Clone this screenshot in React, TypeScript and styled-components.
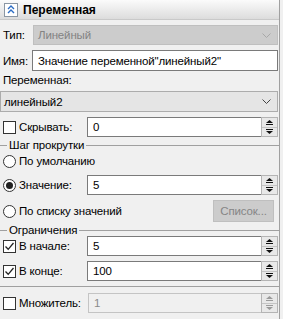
import React from 'react';
import styled, { createGlobalStyle } from 'styled-components';

const GlobalStyle = createGlobalStyle`
  html, body {
    margin: 0;
    padding: 0;
    background: #f0f0f0;
  }
  body {
    font-family: 'Liberation Sans', Arial, sans-serif;
    font-size: 11.5px;
    letter-spacing: -0.15px;
    color: #000;
  }
`;

const Panel = styled.div`
  width: 279px;
  height: 319px;
  border-right: 1px solid #a0a0a0;
  display: flex;
  flex-direction: column;
  overflow: hidden;
`;

const Header = styled.div`
  height: 19px;
  border-bottom: 1px solid #c9c9c9;
  background: linear-gradient(#fbfbfb, #dcdcdc);
  display: flex;
  align-items: center;
  gap: 5px;
  padding-left: 4px;
  font-weight: bold;
  font-size: 12px;
  letter-spacing: 0;
`;

const CollapseIcon = styled.div`
  width: 12px;
  height: 12px;
  border: 1px solid #8a96a3;
  background: #fff;
  display: flex;
  align-items: center;
  justify-content: center;
`;

const Body = styled.div`
  padding: 0 1px 0 3px;
  display: flex;
  flex-direction: column;
`;

const Row = styled.div<{ $top: number; $h: number }>`
  display: flex;
  align-items: center;
  margin-top: ${p => p.$top}px;
  height: ${p => p.$h}px;
  white-space: nowrap;
`;

const Label = styled.span<{ $w?: number }>`
  width: ${p => (p.$w ? `${p.$w}px` : 'auto')};
  flex-shrink: 0;
`;

const Select = styled.div<{ $disabled?: boolean; $full?: boolean }>`
  flex: 1;
  height: 100%;
  box-sizing: border-box;
  margin-left: ${p => (p.$full ? '-3px' : '0')};
  border: 1px solid ${p => (p.$disabled ? '#bfbfbf' : '#acacac')};
  background: ${p => (p.$disabled ? '#cccccc' : '#e5e5e5')};
  color: ${p => (p.$disabled ? '#838383' : '#000')};
  display: flex;
  align-items: center;
  justify-content: space-between;
  padding: 0 6px 0 ${p => (p.$full ? '3px' : '4px')};
`;

const TextField = styled.div<{ $disabled?: boolean }>`
  flex: 1;
  height: 100%;
  box-sizing: border-box;
  border: 1px solid ${p => (p.$disabled ? '#c4c4c4' : '#7a7a7a')};
  background: ${p => (p.$disabled ? '#f0f0f0' : '#fff')};
  color: ${p => (p.$disabled ? '#8a8a8a' : '#000')};
  display: flex;
  align-items: center;
  padding-left: 5px;
`;

const SpinField = styled.div<{ $disabled?: boolean }>`
  flex: 1;
  height: 100%;
  box-sizing: border-box;
  display: flex;
  border: 1px solid ${p => (p.$disabled ? '#c4c4c4' : '#7a7a7a')};
  border-right: none;
  background: ${p => (p.$disabled ? '#f0f0f0' : '#fff')};
  color: ${p => (p.$disabled ? '#8a8a8a' : '#000')};
`;

const SpinValue = styled.div`
  flex: 1;
  display: flex;
  align-items: center;
  padding-left: 5px;
`;

const Spin = styled.div`
  width: 17px;
  margin: -1px 0;
  box-sizing: border-box;
  border: 1px solid #b4b4b4;
  display: flex;
  flex-direction: column;
  background: #f0f0f0;
`;

const SpinButton = styled.div`
  flex: 1;
  display: flex;
  align-items: center;
  justify-content: center;
  background: #e8e8e8;
  & + & {
    border-top: 1px solid #c4c4c4;
  }
`;

const Box = styled.div`
  width: 13px;
  height: 13px;
  box-sizing: border-box;
  border: 1px solid #333;
  background: #fff;
  margin-right: 3px;
  display: flex;
  align-items: center;
  justify-content: center;
  flex-shrink: 0;
`;

const Radio = styled.div<{ $checked?: boolean }>`
  width: 13px;
  height: 13px;
  box-sizing: border-box;
  border: 1px solid #333;
  border-radius: 50%;
  background: #fff;
  margin-right: 3px;
  display: flex;
  align-items: center;
  justify-content: center;
  flex-shrink: 0;
  &::after {
    content: '';
    display: ${p => (p.$checked ? 'block' : 'none')};
    width: 7px;
    height: 7px;
    border-radius: 50%;
    background: #222;
  }
`;

const Group = styled.div<{ $top: number; $h: number }>`
  margin: ${p => p.$top}px -1px 0 -3px;
  height: ${p => p.$h}px;
  display: flex;
  align-items: center;
  gap: 2px;
  white-space: nowrap;
  &::before {
    content: '';
    width: 7px;
    height: 1px;
    background: #a0a0a0;
  }
  &::after {
    content: '';
    flex: 1;
    height: 1px;
    background: #a0a0a0;
  }
`;

const Separator = styled.div<{ $top: number }>`
  margin: ${p => p.$top}px -1px 0 -3px;
  height: 1px;
  background: #a0a0a0;
`;

const Button = styled.div`
  margin-left: auto;
  margin-right: 4px;
  width: 61px;
  height: 100%;
  box-sizing: border-box;
  border: 1px solid #bfbfbf;
  background: #cccccc;
  color: #858585;
  display: flex;
  align-items: center;
  justify-content: center;
`;

function Chevron({ color }: { color: string }) {
  return (
    <svg width="9" height="5" viewBox="0 0 9 5">
      <polyline points="0.5,0.5 4.5,4.5 8.5,0.5" fill="none" stroke={color} strokeWidth="1" />
    </svg>
  );
}

function Arrow({ up, color }: { up?: boolean; color: string }) {
  return (
    <svg width="7" height="5" viewBox="0 0 7 5">
      {up ? (
        <>
          <polygon points="0,3 3.5,0 7,3" fill={color} />
          <rect x="0" y="4" width="7" height="1" fill={color} />
        </>
      ) : (
        <>
          <rect x="0" y="0" width="7" height="1" fill={color} />
          <polygon points="0,2 3.5,5 7,2" fill={color} />
        </>
      )}
    </svg>
  );
}

function Check() {
  return (
    <svg width="11" height="11" viewBox="0 0 11 11">
      <polyline points="1.5,5.5 4.2,8.3 9.5,2" fill="none" stroke="#222" strokeWidth="1.3" />
    </svg>
  );
}

function Spinner({ value, disabled }: { value: string; disabled?: boolean }) {
  const c = disabled ? '#9a9a9a' : '#111';
  return (
    <SpinField $disabled={disabled}>
      <SpinValue>{value}</SpinValue>
      <Spin>
        <SpinButton><Arrow up color={c} /></SpinButton>
        <SpinButton><Arrow color={c} /></SpinButton>
      </Spin>
    </SpinField>
  );
}

export default function App() {
  return (
    <>
      <GlobalStyle />
      <Panel>
        <Header>
          <CollapseIcon>
            <svg width="8" height="9" viewBox="0 0 8 9">
              <polyline points="1,4 4,1 7,4" fill="none" stroke="#2b6cc4" strokeWidth="1.4" />
              <polyline points="1,8 4,5 7,8" fill="none" stroke="#2b6cc4" strokeWidth="1.4" />
            </svg>
          </CollapseIcon>
          Переменная
        </Header>
        <Body>
          <Row $top={5} $h={20}>
            <Label $w={30}>Тип:</Label>
            <Select $disabled>
              Линейный
              <Chevron color="#a8a8a8" />
            </Select>
          </Row>
          <Row $top={5} $h={21}>
            <Label $w={29}>Имя:</Label>
            <TextField>Значение переменной"линейный2"</TextField>
          </Row>
          <Row $top={1} $h={16}>
            <Label>Переменная:</Label>
          </Row>
          <Row $top={3} $h={21}>
            <Select $full>
              линейный2
              <Chevron color="#444" />
            </Select>
          </Row>
          <Row $top={5} $h={20}>
            <Box />
            <Label $w={68}>Скрывать:</Label>
            <Spinner value="0" />
          </Row>
          <Group $top={1} $h={14}>Шаг прокрутки</Group>
          <Row $top={1} $h={16}>
            <Radio />
            <Label>По умолчанию</Label>
          </Row>
          <Row $top={6} $h={20}>
            <Radio $checked />
            <Label $w={68}>Значение:</Label>
            <Spinner value="5" />
          </Row>
          <Row $top={5} $h={22}>
            <Radio />
            <Label>По списку значений</Label>
            <Button>Список...</Button>
          </Row>
          <Group $top={2} $h={12}>Ограничения</Group>
          <Row $top={0} $h={20}>
            <Box><Check /></Box>
            <Label $w={68}>В начале:</Label>
            <Spinner value="5" />
          </Row>
          <Row $top={5} $h={20}>
            <Box><Check /></Box>
            <Label $w={68}>В конце:</Label>
            <Spinner value="100" />
          </Row>
          <Separator $top={5} />
          <Row $top={6} $h={20}>
            <Box />
            <Label $w={69}>Множитель:</Label>
            <Spinner value="1" disabled />
          </Row>
        </Body>
      </Panel>
    </>
  );
}
